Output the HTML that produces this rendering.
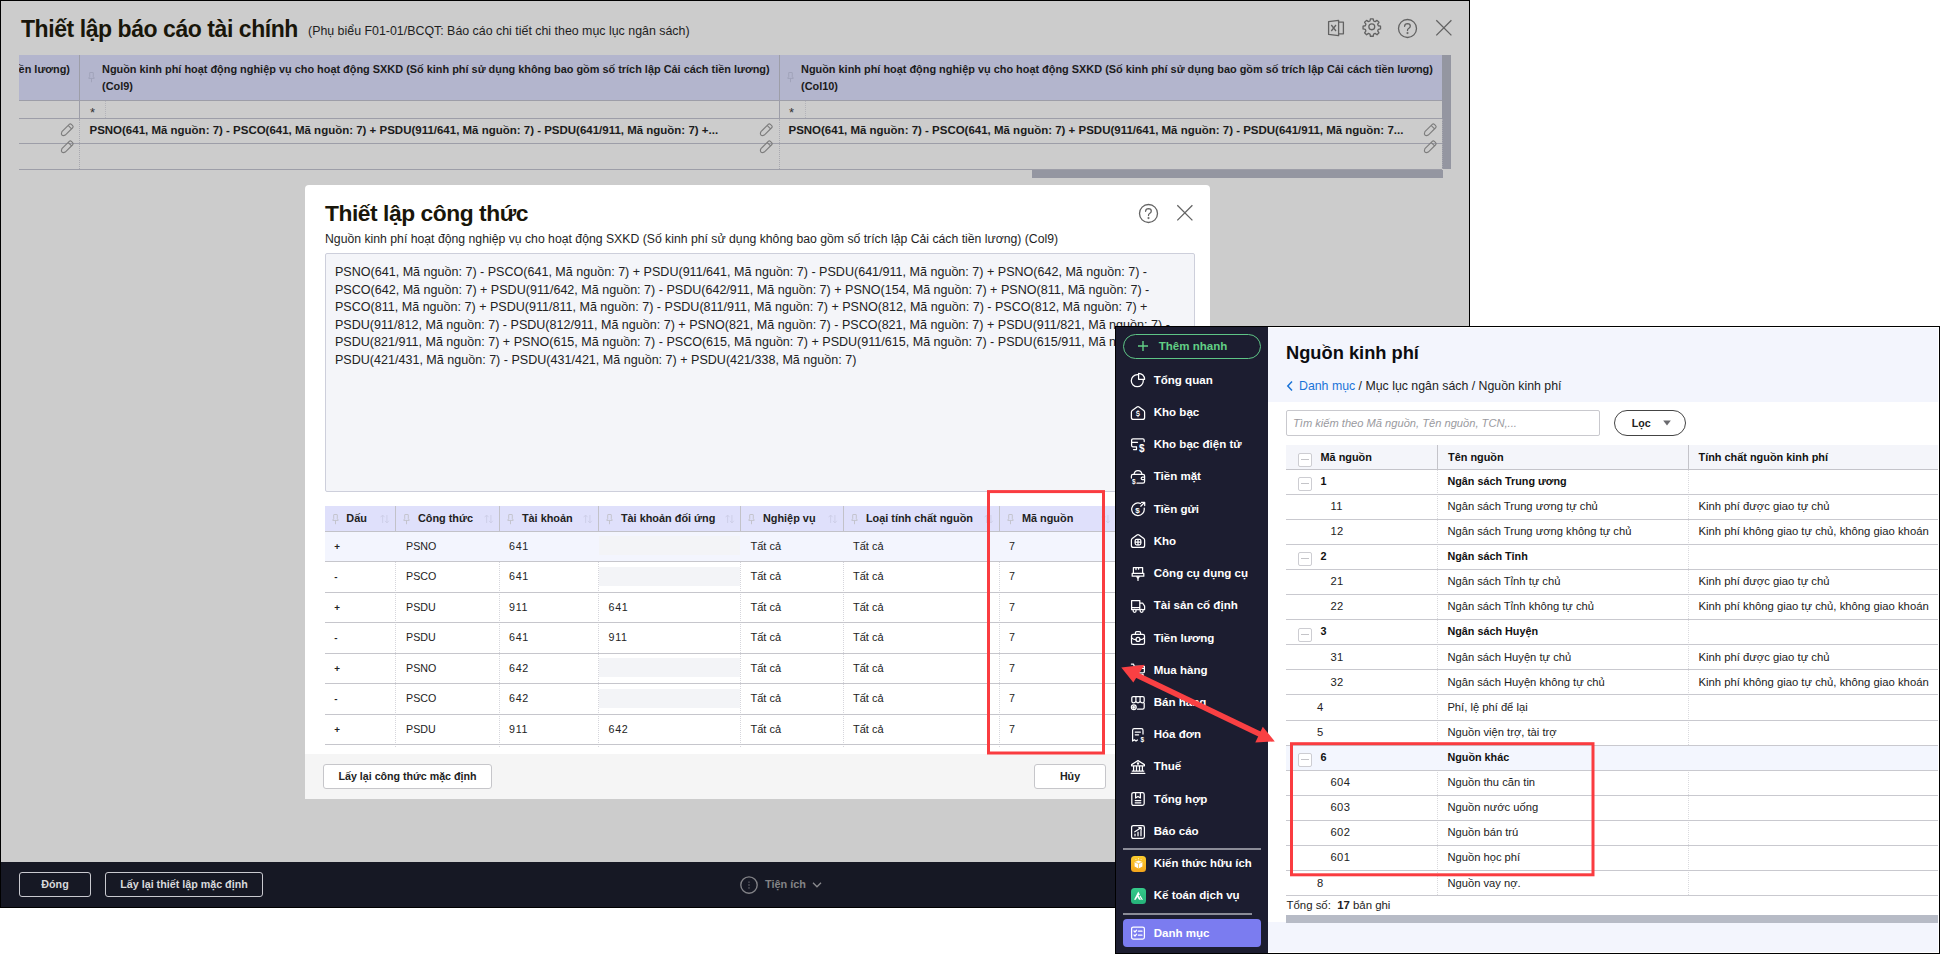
<!DOCTYPE html>
<html>
<head>
<meta charset="utf-8">
<title>Thiết lập báo cáo tài chính</title>
<style>

*{box-sizing:border-box;margin:0;padding:0}
html,body{width:1940px;height:954px;overflow:hidden;background:#fff}
body{font-family:"Liberation Sans",sans-serif;font-size:13px;line-height:16px;color:#111;position:relative}
div,span,svg{position:absolute}
span.i{position:static}
#w1{left:0;top:0;width:1470px;height:908px;background:#cccccc;overflow:hidden}
#w1 .bt{left:0;top:0;width:1470px;height:1px;background:#000}
#w1 .bl{left:0;top:0;width:1px;height:908px;background:#000}
#w1 .br{left:1469px;top:0;width:1px;height:908px;background:#000}
#w1 .bb{left:0;top:907px;width:1470px;height:1px;background:#000}
.t{white-space:nowrap}
.b{font-weight:bold}
#w1 .title{left:21px;top:14px;font-size:23px;letter-spacing:-0.44px;font-weight:bold;color:#19160a;line-height:28px}
#w1 .sub{left:308px;top:23px;font-size:12.4px;color:#1e1e1e;line-height:16px}
#w1foot{left:1px;top:862px;width:1468px;height:46px;background:#161824}
.dbtn{top:10px;height:25px;border:1px solid #c9c9cf;border-radius:3px;color:#d8d8dc;font-weight:bold;font-size:10.72px;line-height:23px;text-align:center;white-space:nowrap}
.g1t{font-weight:bold;font-size:12px;color:#1b1b1b;line-height:16px;white-space:nowrap}
#dlg{left:305px;top:185px;width:905px;height:614px;background:#fff;border-radius:4px 4px 0 0;overflow:hidden}
#dlg .dtitle{left:20px;top:14px;font-size:22px;font-weight:bold;color:#19160a;line-height:28px}
#dlg .dsub{left:20px;top:45px;font-size:12.6px;line-height:16px;color:#1e1e1e}
#ta{left:20px;top:69px;width:870px;height:238px;background:#f4f5f9;border:1px solid #cdcfdb;border-radius:2px}
#ta .l{left:9px;font-size:12.6px;line-height:16px;color:#222;white-space:nowrap}
#dfoot{left:0;top:569px;width:905px;height:46px;background:#f5f5f5}
.lbtn{top:10px;height:25px;border:1px solid #c6c6ca;border-radius:3px;background:#fff;color:#222;font-weight:bold;font-size:10.66px;line-height:23px;text-align:center;white-space:nowrap}
.g2h{font-weight:bold;font-size:12px;line-height:16px;color:#222;white-space:nowrap}
.g2c{font-size:10.7px;line-height:16px;color:#222;white-space:nowrap}
#w2{left:1115px;top:326px;width:825px;height:628px;background:#fff;overflow:hidden}
#side{left:0;top:0;width:153px;height:628px;background:#1c1d30}
#side .it{left:38px;font-size:12.6px;font-weight:bold;color:#fff;white-space:nowrap;line-height:16px}
#main{left:153px;top:0;width:672px;height:628px;background:#fff}
.g3c{white-space:nowrap;line-height:16px;font-size:12px;color:#222}
.g3b{white-space:nowrap;line-height:16px;font-size:12px;color:#111;font-weight:bold}
.cb{width:14px;height:14px;border:1px solid #cdcdd2;border-radius:2px;background:#fff}
.cb i{position:absolute;left:2px;right:2px;top:5px;height:1px;background:#c4c4c8}
#anno{left:0;top:0;width:1940px;height:954px}

</style>
</head>
<body>
<div id="w1">
<div class="t title" style="left:21px;top:15px;">Thiết lập báo cáo tài chính</div>
<div class="t sub" style="left:308px;top:23px;">(Phụ biểu F01-01/BCQT: Báo cáo chi tiết chi theo mục lục ngân sách)</div>
<svg style="left:1326px;top:18px" width="20" height="20" viewBox="0 0 20 20"><g fill="none" stroke="#626262" stroke-width="1.3" stroke-linejoin="round"><path d="M2.6 3.6 L12.6 2.3 V17.7 L2.6 16.4 Z"/><path d="M12.6 4.2 H17.4 V15.8 H12.6"/><path d="M5.3 7 L10 13 M10 7 L5.3 13"/></g></svg>
<svg style="left:1362.2px;top:17.4px" width="19.6" height="19.6" viewBox="0 0 24 24"><g fill="none" stroke="#626262" stroke-width="1.6" stroke-linejoin="round"><circle cx="12" cy="12" r="3.6"/><path d="M10.3 2.2h3.4l.5 2.7 1.9.8 2.3-1.6 2.4 2.4-1.6 2.3.8 1.9 2.7.5v3.4l-2.7.5-.8 1.9 1.6 2.3-2.4 2.4-2.3-1.6-1.9.8-.5 2.7h-3.4l-.5-2.7-1.9-.8-2.3 1.6-2.4-2.4 1.6-2.3-.8-1.9-2.7-.5v-3.4l2.7-.5.8-1.9-1.6-2.3 2.4-2.4 2.3 1.6 1.9-.8z"/></g></svg>
<svg style="left:1397px;top:18px" width="21" height="21" viewBox="0 0 21 21"><g fill="none" stroke="#626262" stroke-width="1.3" stroke-linecap="round"><circle cx="10.5" cy="10.5" r="9"/><path d="M7.6 8.3 Q7.8 5.6 10.5 5.6 Q13.3 5.7 13.3 8.1 Q13.3 9.6 11.6 10.5 Q10.5 11.1 10.5 12.6"/><circle cx="10.5" cy="15.1" r="0.4"/></g></svg>
<svg style="left:1435px;top:19px" width="18" height="18" viewBox="0 0 18 18"><path d="M1.3 1.3 L16.4 16.4 M16.4 1.3 L1.3 16.4" fill="none" stroke="#626262" stroke-width="1.3"/></svg>
<div style="left:19px;top:55px;width:1423px;height:45px;background:#b3b5cd"></div>
<div style="left:19px;top:100px;width:1423px;height:1px;background:#9d9ea8"></div>
<div style="left:19px;top:118px;width:1423px;height:1px;background:#9d9ea8"></div>
<div style="left:19px;top:143px;width:1423px;height:1px;background:#9d9ea8"></div>
<div style="left:19px;top:169px;width:1423px;height:1px;background:#9d9ea8"></div>
<div style="left:79px;top:55px;width:1px;height:64px;background:#9d9ea8"></div>
<div style="left:79px;top:119px;width:0px;height:50px;border-left:1px dotted #a9a9b0"></div>
<div style="left:779px;top:55px;width:1px;height:64px;background:#9d9ea8"></div>
<div style="left:779px;top:119px;width:0px;height:50px;border-left:1px dotted #a9a9b0"></div>
<div style="left:105px;top:101px;width:0px;height:17px;border-left:1px dotted #b4b4ba"></div>
<div style="left:805px;top:101px;width:0px;height:17px;border-left:1px dotted #b4b4ba"></div>
<div style="left:19px;top:55px;width:60px;height:45px;overflow:hidden"><div class="g1t" style="left:-49px;width:100px;text-align:right;top:6px;font-size:10.91px">tiền lương)</div></div>
<div class="g1t" style="left:102px;top:61px;font-size:10.91px">Nguồn kinh phí hoạt động nghiệp vụ cho hoạt động SXKD (Số kinh phí sử dụng không bao gồm số trích lập Cải cách tiền lương)</div>
<div class="g1t" style="left:102px;top:77.5px;font-size:10.91px">(Col9)</div>
<div class="g1t" style="left:801px;top:61px;font-size:10.91px">Nguồn kinh phí hoạt động nghiệp vụ cho hoạt động SXKD (Số kinh phí sử dụng bao gồm số trích lập Cải cách tiền lương)</div>
<div class="g1t" style="left:801px;top:77.5px;font-size:10.91px">(Col10)</div>
<svg style="left:88px;top:72.3px" width="7" height="11" viewBox="0 0 7 11"><path d="M1.7 0.9 Q1.7 0.5 2.1 0.5 H4.9 Q5.3 0.5 5.3 0.9 V4.6 L6.2 6 V6.4 H0.8 V6 L1.7 4.6 Z M3.5 6.4 V10.2" fill="none" stroke="#a0a2b8" stroke-width="0.95"/></svg>
<svg style="left:787px;top:72.3px" width="7" height="11" viewBox="0 0 7 11"><path d="M1.7 0.9 Q1.7 0.5 2.1 0.5 H4.9 Q5.3 0.5 5.3 0.9 V4.6 L6.2 6 V6.4 H0.8 V6 L1.7 4.6 Z M3.5 6.4 V10.2" fill="none" stroke="#a0a2b8" stroke-width="0.95"/></svg>
<div class="t" style="left:90px;top:104.5px;font-size:13px;color:#333;line-height:16px">*</div>
<div class="t" style="left:789px;top:104.5px;font-size:13px;color:#333;line-height:16px">*</div>
<div class="g1t" style="left:89.5px;top:122px;font-size:11.49px">PSNO(641, Mã nguồn: 7) - PSCO(641, Mã nguồn: 7) + PSDU(911/641, Mã nguồn: 7) - PSDU(641/911, Mã nguồn: 7) +...</div>
<div class="g1t" style="left:788.5px;top:122px;font-size:11.49px">PSNO(641, Mã nguồn: 7) - PSCO(641, Mã nguồn: 7) + PSDU(911/641, Mã nguồn: 7) - PSDU(641/911, Mã nguồn: 7...</div>
<svg style="left:58.6px;top:122px" width="16" height="16" viewBox="0 0 16 16"><g transform="rotate(-45 8 8)" fill="none" stroke="#7c7c7c" stroke-width="1.1"><path d="M3.2 5.6 H13.6 Q15.1 5.6 15.1 7.1 V8.9 Q15.1 10.4 13.6 10.4 H3.2 Q0.9 9.6 0.9 8 Q0.9 6.4 3.2 5.6 Z M12 5.6 V10.4"/></g></svg>
<svg style="left:58.6px;top:139px" width="16" height="16" viewBox="0 0 16 16"><g transform="rotate(-45 8 8)" fill="none" stroke="#7c7c7c" stroke-width="1.1"><path d="M3.2 5.6 H13.6 Q15.1 5.6 15.1 7.1 V8.9 Q15.1 10.4 13.6 10.4 H3.2 Q0.9 9.6 0.9 8 Q0.9 6.4 3.2 5.6 Z M12 5.6 V10.4"/></g></svg>
<svg style="left:757.6px;top:122px" width="16" height="16" viewBox="0 0 16 16"><g transform="rotate(-45 8 8)" fill="none" stroke="#7c7c7c" stroke-width="1.1"><path d="M3.2 5.6 H13.6 Q15.1 5.6 15.1 7.1 V8.9 Q15.1 10.4 13.6 10.4 H3.2 Q0.9 9.6 0.9 8 Q0.9 6.4 3.2 5.6 Z M12 5.6 V10.4"/></g></svg>
<svg style="left:757.6px;top:139px" width="16" height="16" viewBox="0 0 16 16"><g transform="rotate(-45 8 8)" fill="none" stroke="#7c7c7c" stroke-width="1.1"><path d="M3.2 5.6 H13.6 Q15.1 5.6 15.1 7.1 V8.9 Q15.1 10.4 13.6 10.4 H3.2 Q0.9 9.6 0.9 8 Q0.9 6.4 3.2 5.6 Z M12 5.6 V10.4"/></g></svg>
<svg style="left:1422px;top:122px" width="16" height="16" viewBox="0 0 16 16"><g transform="rotate(-45 8 8)" fill="none" stroke="#7c7c7c" stroke-width="1.1"><path d="M3.2 5.6 H13.6 Q15.1 5.6 15.1 7.1 V8.9 Q15.1 10.4 13.6 10.4 H3.2 Q0.9 9.6 0.9 8 Q0.9 6.4 3.2 5.6 Z M12 5.6 V10.4"/></g></svg>
<svg style="left:1422px;top:139px" width="16" height="16" viewBox="0 0 16 16"><g transform="rotate(-45 8 8)" fill="none" stroke="#7c7c7c" stroke-width="1.1"><path d="M3.2 5.6 H13.6 Q15.1 5.6 15.1 7.1 V8.9 Q15.1 10.4 13.6 10.4 H3.2 Q0.9 9.6 0.9 8 Q0.9 6.4 3.2 5.6 Z M12 5.6 V10.4"/></g></svg>
<div style="left:1442px;top:55px;width:9px;height:114px;background:#9496a1"></div>
<div style="left:1032px;top:170px;width:411px;height:8px;background:#9496a1"></div>
<div style="left:1442px;top:119px;width:0px;height:50px;border-left:1px dotted #a9a9b0"></div>
<div id="w1foot"><div class="dbtn" style="left:18px;width:72px">Đóng</div><div class="dbtn" style="left:104px;width:158px">Lấy lại thiết lập mặc định</div><svg style="left:738.2px;top:12.6px" width="20" height="20" viewBox="0 0 20 20"><g fill="none" stroke="#838388" stroke-width="1.35"><circle cx="10" cy="10" r="8.2"/></g><g fill="#838388"><circle cx="10" cy="7.1" r="0.7"/><circle cx="10" cy="10" r="0.7"/><circle cx="10" cy="12.9" r="0.7"/></g></svg><div class="t b" style="left:764px;top:14px;font-size:10.9px;color:#838386;line-height:16px">Tiện ích</div><svg style="left:811px;top:17.5px" width="10" height="10" viewBox="0 0 10 10"><path d="M1 2.8 L5 6.8 L9 2.8" fill="none" stroke="#8a8a8e" stroke-width="1.3"/></svg></div>
<div class="bt"></div><div class="bl"></div><div class="br"></div><div class="bb"></div>
<div id="dlg">
<div class="t dtitle" style="left:20px;top:14px;font-size:22.8px;letter-spacing:-0.45px">Thiết lập công thức</div>
<div class="t dsub" style="left:20px;top:46px;font-size:12.24px">Nguồn kinh phí hoạt động nghiệp vụ cho hoạt động SXKD (Số kinh phí sử dụng không bao gồm số trích lập Cải cách tiền lương) (Col9)</div>
<svg style="left:833px;top:18px" width="21" height="21" viewBox="0 0 21 21"><g fill="none" stroke="#646464" stroke-width="1.3" stroke-linecap="round"><circle cx="10.5" cy="10.5" r="9"/><path d="M7.6 8.3 Q7.8 5.6 10.5 5.6 Q13.3 5.7 13.3 8.1 Q13.3 9.6 11.6 10.5 Q10.5 11.1 10.5 12.6"/><circle cx="10.5" cy="15.1" r="0.4"/></g></svg>
<svg style="left:871px;top:19px" width="18" height="18" viewBox="0 0 18 18"><path d="M1.3 1.3 L16.4 16.4 M16.4 1.3 L1.3 16.4" fill="none" stroke="#646464" stroke-width="1.3"/></svg>
<div id="ta" style="left:20px;top:68px;width:870px;height:239px">
<div class="l" style="top:10px;font-size:12.56px">PSNO(641, Mã nguồn: 7) - PSCO(641, Mã nguồn: 7) + PSDU(911/641, Mã nguồn: 7) - PSDU(641/911, Mã nguồn: 7) + PSNO(642, Mã nguồn: 7) -</div>
<div class="l" style="top:28px;font-size:12.56px">PSCO(642, Mã nguồn: 7) + PSDU(911/642, Mã nguồn: 7) - PSDU(642/911, Mã nguồn: 7) + PSNO(154, Mã nguồn: 7) + PSNO(811, Mã nguồn: 7) -</div>
<div class="l" style="top:45px;font-size:12.56px">PSCO(811, Mã nguồn: 7) + PSDU(911/811, Mã nguồn: 7) - PSDU(811/911, Mã nguồn: 7) + PSNO(812, Mã nguồn: 7) - PSCO(812, Mã nguồn: 7) +</div>
<div class="l" style="top:63px;font-size:12.56px">PSDU(911/812, Mã nguồn: 7) - PSDU(812/911, Mã nguồn: 7) + PSNO(821, Mã nguồn: 7) - PSCO(821, Mã nguồn: 7) + PSDU(911/821, Mã nguồn: 7) -</div>
<div class="l" style="top:80px;font-size:12.56px">PSDU(821/911, Mã nguồn: 7) + PSNO(615, Mã nguồn: 7) - PSCO(615, Mã nguồn: 7) + PSDU(911/615, Mã nguồn: 7) - PSDU(615/911, Mã nguồn: 7) +</div>
<div class="l" style="top:97.5px;font-size:12.56px">PSDU(421/431, Mã nguồn: 7) - PSDU(431/421, Mã nguồn: 7) + PSDU(421/338, Mã nguồn: 7)</div>
</div>
<div style="left:20px;top:321px;width:791px;height:25px;background:#dfe0fb"></div>
<div style="left:20px;top:346px;width:791px;height:1px;background:#c2c2c9"></div>
<div style="left:90px;top:321px;width:1px;height:25px;background:#c2c2c9"></div>
<div style="left:90px;top:347px;width:0px;height:215px;border-left:1px dotted #d6d6dc"></div>
<div style="left:194px;top:321px;width:1px;height:25px;background:#c2c2c9"></div>
<div style="left:194px;top:347px;width:0px;height:215px;border-left:1px dotted #d6d6dc"></div>
<div style="left:293px;top:321px;width:1px;height:25px;background:#c2c2c9"></div>
<div style="left:293px;top:347px;width:0px;height:215px;border-left:1px dotted #d6d6dc"></div>
<div style="left:435px;top:321px;width:1px;height:25px;background:#c2c2c9"></div>
<div style="left:435px;top:347px;width:0px;height:215px;border-left:1px dotted #d6d6dc"></div>
<div style="left:538px;top:321px;width:1px;height:25px;background:#c2c2c9"></div>
<div style="left:538px;top:347px;width:0px;height:215px;border-left:1px dotted #d6d6dc"></div>
<div style="left:694px;top:321px;width:1px;height:25px;background:#c2c2c9"></div>
<div style="left:694px;top:347px;width:0px;height:215px;border-left:1px dotted #d6d6dc"></div>
<svg style="left:26.8px;top:328.6px" width="7" height="11" viewBox="0 0 7 11"><path d="M1.7 0.9 Q1.7 0.5 2.1 0.5 H4.9 Q5.3 0.5 5.3 0.9 V4.6 L6.2 6 V6.4 H0.8 V6 L1.7 4.6 Z M3.5 6.4 V10.2" fill="none" stroke="#c2c2ca" stroke-width="0.95"/></svg>
<div class="g2h" style="left:41.3px;top:325.3px;font-size:10.9px">Dấu</div>
<svg style="left:74.5px;top:329.4px" width="10" height="10" viewBox="0 0 10 10"><path d="M2.6 9 V1.2 M0.7 3.2 L2.6 1 L4.5 3.2 M6.9 1 V8.8 M5 6.8 L6.9 9 L8.8 6.8" fill="none" stroke="#cdcee6" stroke-width="0.9"/></svg>
<svg style="left:98.4px;top:328.6px" width="7" height="11" viewBox="0 0 7 11"><path d="M1.7 0.9 Q1.7 0.5 2.1 0.5 H4.9 Q5.3 0.5 5.3 0.9 V4.6 L6.2 6 V6.4 H0.8 V6 L1.7 4.6 Z M3.5 6.4 V10.2" fill="none" stroke="#c2c2ca" stroke-width="0.95"/></svg>
<div class="g2h" style="left:112.9px;top:325.3px;font-size:10.9px">Công thức</div>
<svg style="left:178.5px;top:329.4px" width="10" height="10" viewBox="0 0 10 10"><path d="M2.6 9 V1.2 M0.7 3.2 L2.6 1 L4.5 3.2 M6.9 1 V8.8 M5 6.8 L6.9 9 L8.8 6.8" fill="none" stroke="#cdcee6" stroke-width="0.9"/></svg>
<svg style="left:202.4px;top:328.6px" width="7" height="11" viewBox="0 0 7 11"><path d="M1.7 0.9 Q1.7 0.5 2.1 0.5 H4.9 Q5.3 0.5 5.3 0.9 V4.6 L6.2 6 V6.4 H0.8 V6 L1.7 4.6 Z M3.5 6.4 V10.2" fill="none" stroke="#c2c2ca" stroke-width="0.95"/></svg>
<div class="g2h" style="left:216.9px;top:325.3px;font-size:10.9px">Tài khoản</div>
<svg style="left:277.5px;top:329.4px" width="10" height="10" viewBox="0 0 10 10"><path d="M2.6 9 V1.2 M0.7 3.2 L2.6 1 L4.5 3.2 M6.9 1 V8.8 M5 6.8 L6.9 9 L8.8 6.8" fill="none" stroke="#cdcee6" stroke-width="0.9"/></svg>
<svg style="left:301.4px;top:328.6px" width="7" height="11" viewBox="0 0 7 11"><path d="M1.7 0.9 Q1.7 0.5 2.1 0.5 H4.9 Q5.3 0.5 5.3 0.9 V4.6 L6.2 6 V6.4 H0.8 V6 L1.7 4.6 Z M3.5 6.4 V10.2" fill="none" stroke="#c2c2ca" stroke-width="0.95"/></svg>
<div class="g2h" style="left:315.9px;top:325.3px;font-size:10.9px">Tài khoản đối ứng</div>
<svg style="left:419.5px;top:329.4px" width="10" height="10" viewBox="0 0 10 10"><path d="M2.6 9 V1.2 M0.7 3.2 L2.6 1 L4.5 3.2 M6.9 1 V8.8 M5 6.8 L6.9 9 L8.8 6.8" fill="none" stroke="#cdcee6" stroke-width="0.9"/></svg>
<svg style="left:443.4px;top:328.6px" width="7" height="11" viewBox="0 0 7 11"><path d="M1.7 0.9 Q1.7 0.5 2.1 0.5 H4.9 Q5.3 0.5 5.3 0.9 V4.6 L6.2 6 V6.4 H0.8 V6 L1.7 4.6 Z M3.5 6.4 V10.2" fill="none" stroke="#c2c2ca" stroke-width="0.95"/></svg>
<div class="g2h" style="left:457.9px;top:325.3px;font-size:10.9px">Nghiệp vụ</div>
<svg style="left:522.5px;top:329.4px" width="10" height="10" viewBox="0 0 10 10"><path d="M2.6 9 V1.2 M0.7 3.2 L2.6 1 L4.5 3.2 M6.9 1 V8.8 M5 6.8 L6.9 9 L8.8 6.8" fill="none" stroke="#cdcee6" stroke-width="0.9"/></svg>
<svg style="left:546.4px;top:328.6px" width="7" height="11" viewBox="0 0 7 11"><path d="M1.7 0.9 Q1.7 0.5 2.1 0.5 H4.9 Q5.3 0.5 5.3 0.9 V4.6 L6.2 6 V6.4 H0.8 V6 L1.7 4.6 Z M3.5 6.4 V10.2" fill="none" stroke="#c2c2ca" stroke-width="0.95"/></svg>
<div class="g2h" style="left:560.9px;top:325.3px;font-size:10.9px">Loại tính chất nguồn</div>
<svg style="left:678.5px;top:329.4px" width="10" height="10" viewBox="0 0 10 10"><path d="M2.6 9 V1.2 M0.7 3.2 L2.6 1 L4.5 3.2 M6.9 1 V8.8 M5 6.8 L6.9 9 L8.8 6.8" fill="none" stroke="#cdcee6" stroke-width="0.9"/></svg>
<svg style="left:702.4px;top:328.6px" width="7" height="11" viewBox="0 0 7 11"><path d="M1.7 0.9 Q1.7 0.5 2.1 0.5 H4.9 Q5.3 0.5 5.3 0.9 V4.6 L6.2 6 V6.4 H0.8 V6 L1.7 4.6 Z M3.5 6.4 V10.2" fill="none" stroke="#c2c2ca" stroke-width="0.95"/></svg>
<div class="g2h" style="left:716.9px;top:325.3px;font-size:10.9px">Mã nguồn</div>
<svg style="left:795.5px;top:329.4px" width="10" height="10" viewBox="0 0 10 10"><path d="M2.6 9 V1.2 M0.7 3.2 L2.6 1 L4.5 3.2 M6.9 1 V8.8 M5 6.8 L6.9 9 L8.8 6.8" fill="none" stroke="#cdcee6" stroke-width="0.9"/></svg>
<div style="left:20px;top:347px;width:791px;height:29px;background:#f3f5fe"></div>
<div style="left:20px;top:376px;width:791px;height:1px;background:#c6c6cc"></div>
<div style="left:20px;top:407px;width:791px;height:1px;background:#c6c6cc"></div>
<div style="left:20px;top:437px;width:791px;height:1px;background:#c6c6cc"></div>
<div style="left:20px;top:468px;width:791px;height:1px;background:#c6c6cc"></div>
<div style="left:20px;top:498px;width:791px;height:1px;background:#c6c6cc"></div>
<div style="left:20px;top:529px;width:791px;height:1px;background:#c6c6cc"></div>
<div style="left:20px;top:559px;width:791px;height:1px;background:#c6c6cc"></div>
<div class="g2c" style="left:29.2px;top:353.9px;font-weight:bold;font-size:9.8px">+</div>
<div class="g2c" style="left:101px;top:352.7px;">PSNO</div>
<div class="g2c" style="left:204px;top:352.7px;letter-spacing:0.7px">641</div>
<div style="left:294px;top:351px;width:141px;height:19px;background:#f3f4f7"></div>
<div class="g2c" style="left:445.5px;top:352.7px;font-size:11px">Tất cả</div>
<div class="g2c" style="left:548px;top:352.7px;font-size:11px">Tất cả</div>
<div class="g2c" style="left:704px;top:352.7px;">7</div>
<div class="g2c" style="left:29.2px;top:384.4px;font-weight:bold;font-size:9.8px">-</div>
<div class="g2c" style="left:101px;top:383.2px;">PSCO</div>
<div class="g2c" style="left:204px;top:383.2px;letter-spacing:0.7px">641</div>
<div style="left:294px;top:381.5px;width:141px;height:19px;background:#f3f4f7"></div>
<div class="g2c" style="left:445.5px;top:383.2px;font-size:11px">Tất cả</div>
<div class="g2c" style="left:548px;top:383.2px;font-size:11px">Tất cả</div>
<div class="g2c" style="left:704px;top:383.2px;">7</div>
<div class="g2c" style="left:29.2px;top:414.9px;font-weight:bold;font-size:9.8px">+</div>
<div class="g2c" style="left:101px;top:413.7px;">PSDU</div>
<div class="g2c" style="left:204px;top:413.7px;letter-spacing:0.7px">911</div>
<div class="g2c" style="left:303.5px;top:413.7px;letter-spacing:0.7px">641</div>
<div class="g2c" style="left:445.5px;top:413.7px;font-size:11px">Tất cả</div>
<div class="g2c" style="left:548px;top:413.7px;font-size:11px">Tất cả</div>
<div class="g2c" style="left:704px;top:413.7px;">7</div>
<div class="g2c" style="left:29.2px;top:445.4px;font-weight:bold;font-size:9.8px">-</div>
<div class="g2c" style="left:101px;top:444.2px;">PSDU</div>
<div class="g2c" style="left:204px;top:444.2px;letter-spacing:0.7px">641</div>
<div class="g2c" style="left:303.5px;top:444.2px;letter-spacing:0.7px">911</div>
<div class="g2c" style="left:445.5px;top:444.2px;font-size:11px">Tất cả</div>
<div class="g2c" style="left:548px;top:444.2px;font-size:11px">Tất cả</div>
<div class="g2c" style="left:704px;top:444.2px;">7</div>
<div class="g2c" style="left:29.2px;top:475.9px;font-weight:bold;font-size:9.8px">+</div>
<div class="g2c" style="left:101px;top:474.7px;">PSNO</div>
<div class="g2c" style="left:204px;top:474.7px;letter-spacing:0.7px">642</div>
<div style="left:294px;top:473px;width:141px;height:19px;background:#f3f4f7"></div>
<div class="g2c" style="left:445.5px;top:474.7px;font-size:11px">Tất cả</div>
<div class="g2c" style="left:548px;top:474.7px;font-size:11px">Tất cả</div>
<div class="g2c" style="left:704px;top:474.7px;">7</div>
<div class="g2c" style="left:29.2px;top:506.4px;font-weight:bold;font-size:9.8px">-</div>
<div class="g2c" style="left:101px;top:505.2px;">PSCO</div>
<div class="g2c" style="left:204px;top:505.2px;letter-spacing:0.7px">642</div>
<div style="left:294px;top:503.5px;width:141px;height:19px;background:#f3f4f7"></div>
<div class="g2c" style="left:445.5px;top:505.2px;font-size:11px">Tất cả</div>
<div class="g2c" style="left:548px;top:505.2px;font-size:11px">Tất cả</div>
<div class="g2c" style="left:704px;top:505.2px;">7</div>
<div class="g2c" style="left:29.2px;top:536.9px;font-weight:bold;font-size:9.8px">+</div>
<div class="g2c" style="left:101px;top:535.7px;">PSDU</div>
<div class="g2c" style="left:204px;top:535.7px;letter-spacing:0.7px">911</div>
<div class="g2c" style="left:303.5px;top:535.7px;letter-spacing:0.7px">642</div>
<div class="g2c" style="left:445.5px;top:535.7px;font-size:11px">Tất cả</div>
<div class="g2c" style="left:548px;top:535.7px;font-size:11px">Tất cả</div>
<div class="g2c" style="left:704px;top:535.7px;">7</div>
<div id="dfoot" style="left:0;top:569px"><div class="lbtn" style="left:18px;width:169px">Lấy lại công thức mặc định</div><div class="lbtn" style="left:729px;width:72px">Hủy</div></div>
</div>

</div>
<div id="w2">
<div id="main">
</div>
<div style="left:153px;top:1px;width:672px;height:75px;background:#f3f5fd"></div>
<div style="left:153px;top:596px;width:672px;height:32px;background:#f3f5fd"></div>
<div class="t b" style="left:171px;top:15px;font-size:18.28px;line-height:24px;color:#0c0c10">Nguồn kinh phí</div>
<svg style="left:171px;top:54px" width="8" height="12" viewBox="0 0 8 12"><path d="M6 1.5 L1.8 6 L6 10.5" fill="none" stroke="#1a73d8" stroke-width="1.5"/></svg>
<div class="t" style="left:184px;top:52px;font-size:12.33px;color:#222;line-height:16px"><span class="i" style="color:#1a73d8">Danh mục</span> / Mục lục ngân sách / Nguồn kinh phí</div>
<div style="left:171px;top:84px;width:314px;height:26px;background:#fff;border:1px solid #c9c9ce;border-radius:2px"></div>
<div class="t" style="left:178px;top:89px;font-size:11.13px;font-style:italic;color:#9a9aa0;line-height:16px">Tìm kiếm theo Mã nguồn, Tên nguồn, TCN,...</div>
<div style="left:499px;top:84px;width:72px;height:26px;background:#fff;border:1px solid #444;border-radius:13px"></div>
<div class="t b" style="left:516.8px;top:89px;font-size:10.7px;color:#222;line-height:16px">Lọc</div>
<svg style="left:546.5px;top:93px" width="10" height="8" viewBox="0 0 10 8"><path d="M1.2 1.5 H8.8 L5 6.5 Z" fill="#6a6a6e"/></svg>
<div style="left:171px;top:119px;width:654px;height:24px;background:#f4f5fa"></div>
<div style="left:171px;top:143px;width:654px;height:1px;background:#c4c4ca"></div>
<div style="left:322px;top:119px;width:1px;height:24px;background:#c4c4ca"></div>
<div style="left:322px;top:144px;width:0px;height:425px;border-left:1px dotted #dadade"></div>
<div style="left:573px;top:119px;width:1px;height:24px;background:#c4c4ca"></div>
<div style="left:573px;top:144px;width:0px;height:425px;border-left:1px dotted #dadade"></div>
<div class="cb" style="left:183px;top:127px"><i></i></div>
<div class="g3b" style="left:205.5px;top:123px;font-size:10.9px">Mã nguồn</div>
<div class="g3b" style="left:333px;top:123px;font-size:10.9px">Tên nguồn</div>
<div class="g3b" style="left:583.5px;top:123px;font-size:10.9px">Tính chất nguồn kinh phí</div>
<div style="left:171px;top:168px;width:654px;height:1px;background:#c9c9cf"></div>
<div class="cb" style="left:183px;top:151px"><i></i></div>
<div class="g3b" style="left:205.5px;top:147px;font-size:10.8px">1</div>
<div class="g3b" style="left:332.4px;top:147px;font-size:10.8px">Ngân sách Trung ương</div>
<div style="left:171px;top:193px;width:654px;height:1px;background:#c9c9cf"></div>
<div class="g3c" style="left:215.5px;top:172px;font-size:11.2px;letter-spacing:0.4px">11</div>
<div class="g3c" style="left:332.4px;top:172px;font-size:11.2px">Ngân sách Trung ương tự chủ</div>
<div class="g3c" style="left:583.5px;top:172px;font-size:11.29px">Kinh phí được giao tự chủ</div>
<div style="left:171px;top:218px;width:654px;height:1px;background:#c9c9cf"></div>
<div class="g3c" style="left:215.5px;top:197px;font-size:11.2px;letter-spacing:0.4px">12</div>
<div class="g3c" style="left:332.4px;top:197px;font-size:11.2px">Ngân sách Trung ương không tự chủ</div>
<div class="g3c" style="left:583.5px;top:197px;font-size:11.29px">Kinh phí không giao tự chủ, không giao khoán</div>
<div style="left:171px;top:243px;width:654px;height:1px;background:#c9c9cf"></div>
<div class="cb" style="left:183px;top:226px"><i></i></div>
<div class="g3b" style="left:205.5px;top:222px;font-size:10.8px">2</div>
<div class="g3b" style="left:332.4px;top:222px;font-size:10.8px">Ngân sách Tỉnh</div>
<div style="left:171px;top:268px;width:654px;height:1px;background:#c9c9cf"></div>
<div class="g3c" style="left:215.5px;top:247px;font-size:11.2px;letter-spacing:0.4px">21</div>
<div class="g3c" style="left:332.4px;top:247px;font-size:11.2px">Ngân sách Tỉnh tự chủ</div>
<div class="g3c" style="left:583.5px;top:247px;font-size:11.29px">Kinh phí được giao tự chủ</div>
<div style="left:171px;top:293px;width:654px;height:1px;background:#c9c9cf"></div>
<div class="g3c" style="left:215.5px;top:272px;font-size:11.2px;letter-spacing:0.4px">22</div>
<div class="g3c" style="left:332.4px;top:272px;font-size:11.2px">Ngân sách Tỉnh không tự chủ</div>
<div class="g3c" style="left:583.5px;top:272px;font-size:11.29px">Kinh phí không giao tự chủ, không giao khoán</div>
<div style="left:171px;top:318px;width:654px;height:1px;background:#c9c9cf"></div>
<div class="cb" style="left:183px;top:302px"><i></i></div>
<div class="g3b" style="left:205.5px;top:297px;font-size:10.8px">3</div>
<div class="g3b" style="left:332.4px;top:297px;font-size:10.8px">Ngân sách Huyện</div>
<div style="left:171px;top:343px;width:654px;height:1px;background:#c9c9cf"></div>
<div class="g3c" style="left:215.5px;top:323px;font-size:11.2px;letter-spacing:0.4px">31</div>
<div class="g3c" style="left:332.4px;top:323px;font-size:11.2px">Ngân sách Huyện tự chủ</div>
<div class="g3c" style="left:583.5px;top:323px;font-size:11.29px">Kinh phí được giao tự chủ</div>
<div style="left:171px;top:368px;width:654px;height:1px;background:#c9c9cf"></div>
<div class="g3c" style="left:215.5px;top:348px;font-size:11.2px;letter-spacing:0.4px">32</div>
<div class="g3c" style="left:332.4px;top:348px;font-size:11.2px">Ngân sách Huyện không tự chủ</div>
<div class="g3c" style="left:583.5px;top:348px;font-size:11.29px">Kinh phí không giao tự chủ, không giao khoán</div>
<div style="left:171px;top:394px;width:654px;height:1px;background:#c9c9cf"></div>
<div class="g3c" style="left:202px;top:373px;font-size:11.2px">4</div>
<div class="g3c" style="left:332.4px;top:373px;font-size:11.2px">Phí, lệ phí để lại</div>
<div style="left:171px;top:419px;width:654px;height:1px;background:#c9c9cf"></div>
<div class="g3c" style="left:202px;top:398px;font-size:11.2px">5</div>
<div class="g3c" style="left:332.4px;top:398px;font-size:11.2px">Nguồn viện trợ, tài trợ</div>
<div style="left:171px;top:420px;width:654px;height:24px;background:#f3f6fe"></div>
<div style="left:171px;top:444px;width:654px;height:1px;background:#c9c9cf"></div>
<div class="cb" style="left:183px;top:427px"><i></i></div>
<div class="g3b" style="left:205.5px;top:423px;font-size:10.8px">6</div>
<div class="g3b" style="left:332.4px;top:423px;font-size:10.8px">Nguồn khác</div>
<div style="left:171px;top:469px;width:654px;height:1px;background:#c9c9cf"></div>
<div class="g3c" style="left:215.5px;top:448px;font-size:11.2px;letter-spacing:0.4px">604</div>
<div class="g3c" style="left:332.4px;top:448px;font-size:11.2px">Nguồn thu căn tin</div>
<div style="left:171px;top:494px;width:654px;height:1px;background:#c9c9cf"></div>
<div class="g3c" style="left:215.5px;top:473px;font-size:11.2px;letter-spacing:0.4px">603</div>
<div class="g3c" style="left:332.4px;top:473px;font-size:11.2px">Nguồn nước uống</div>
<div style="left:171px;top:519px;width:654px;height:1px;background:#c9c9cf"></div>
<div class="g3c" style="left:215.5px;top:498px;font-size:11.2px;letter-spacing:0.4px">602</div>
<div class="g3c" style="left:332.4px;top:498px;font-size:11.2px">Nguồn bán trú</div>
<div style="left:171px;top:544px;width:654px;height:1px;background:#c9c9cf"></div>
<div class="g3c" style="left:215.5px;top:523px;font-size:11.2px;letter-spacing:0.4px">601</div>
<div class="g3c" style="left:332.4px;top:523px;font-size:11.2px">Nguồn học phí</div>
<div style="left:171px;top:569px;width:654px;height:1px;background:#c9c9cf"></div>
<div class="g3c" style="left:202px;top:549px;font-size:11.2px">8</div>
<div class="g3c" style="left:332.4px;top:549px;font-size:11.2px">Nguồn vay nợ.</div>
<div class="t" style="left:171.5px;top:571px;font-size:11.4px;color:#222;line-height:16px">Tổng số:&nbsp; <span class="i b">17</span> bản ghi</div>
<div style="left:171px;top:589px;width:653px;height:8px;background:#b7bbc6"></div>
<div id="side">
</div>
<div style="left:8px;top:8px;width:138px;height:25px;border:1.3px solid #5ec486;border-radius:13px"></div>
<svg style="left:22px;top:14px" width="12" height="12" viewBox="0 0 12 12"><path d="M6 1 V11 M1 6 H11" stroke="#62cf85" stroke-width="1.4" fill="none"/></svg>
<div class="t b" style="left:43.7px;top:12px;font-size:11.54px;color:#62cf85;line-height:16px">Thêm nhanh</div>
<svg style="left:15.3px;top:46px" width="16" height="16" viewBox="0 0 16 16"><g stroke="#fff" fill="none" stroke-width="1.25" stroke-linecap="round" stroke-linejoin="round"><circle cx="7.3" cy="8.7" r="6"/><path d="M8.6 1.3 A6 6 0 0 1 14.6 7.3 H8.6 Z" fill="#1c1d30"/></g></svg>
<div class="t b" style="left:38.7px;top:46px;font-size:11.55px;color:#fff;line-height:16px">Tổng quan</div>
<svg style="left:15.3px;top:78.5px" width="16" height="16" viewBox="0 0 16 16"><g stroke="#fff" fill="none" stroke-width="1.25" stroke-linecap="round" stroke-linejoin="round"><path d="M2.2 5.6 L7 1.9 Q8 1.2 9 1.9 L13.8 5.6 Q14.6 6.2 14.6 7.2 V12.4 Q14.6 14.4 12.6 14.4 H3.4 Q1.4 14.4 1.4 12.4 V7.2 Q1.4 6.2 2.2 5.6 Z"/><path d="M8 5.6 V6.4 M8 11 V11.8" stroke-width="0.9"/><text x="8" y="11.1" font-size="6.4" font-weight="bold" text-anchor="middle" fill="#fff" stroke="none" font-family="Liberation Sans">S</text></g></svg>
<div class="t b" style="left:38.7px;top:78px;font-size:11.55px;color:#fff;line-height:16px">Kho bạc</div>
<svg style="left:15.3px;top:110.5px" width="16" height="16" viewBox="0 0 16 16"><g stroke="#fff" fill="none" stroke-width="1.25" stroke-linecap="round" stroke-linejoin="round"><path d="M14.2 4.5 V3.2 Q14.2 1.8 12.8 1.8 H3 Q1.6 1.8 1.6 3.2 V8.5 Q1.6 9.9 3 9.9 H6.3 M1.6 5.3 H7.5 M3.5 12.6 H6.5 V9.9"/><text x="11.8" y="14.6" font-size="10" font-weight="bold" text-anchor="middle" fill="#fff" stroke="none" font-family="Liberation Sans">$</text></g></svg>
<div class="t b" style="left:38.7px;top:110px;font-size:11.55px;color:#fff;line-height:16px">Kho bạc điện tử</div>
<svg style="left:15.3px;top:143px" width="16" height="16" viewBox="0 0 16 16"><g stroke="#fff" fill="none" stroke-width="1.25" stroke-linecap="round" stroke-linejoin="round"><path d="M4 5.4 Q4.6 1.6 8 1.6 Q11.4 1.6 12 5.4 M7 14.2 H13 Q14.6 14.2 14.6 12.6 V7 Q14.6 5.4 13 5.4 H3 Q1.4 5.4 1.4 7 V9 M14.6 8.2 H12.4 Q11.2 8.2 11.2 9.4 Q11.2 10.6 12.4 10.6 H14.6"/><text x="3.7" y="14.6" font-size="6.5" font-weight="bold" text-anchor="middle" fill="#fff" stroke="none" font-family="Liberation Sans">$</text></g></svg>
<div class="t b" style="left:38.7px;top:142px;font-size:11.55px;color:#fff;line-height:16px">Tiền mặt</div>
<svg style="left:15.3px;top:175px" width="16" height="16" viewBox="0 0 16 16"><g stroke="#fff" fill="none" stroke-width="1.25" stroke-linecap="round" stroke-linejoin="round"><path d="M10.6 2.5 A6.3 6.3 0 1 0 14.2 7.2 M10.8 5.2 L14.6 1.4 M11.4 1.3 H14.7 V4.6"/><text x="7.6" y="11.6" font-size="8" font-weight="bold" text-anchor="middle" fill="#fff" stroke="none" font-family="Liberation Sans">$</text></g></svg>
<div class="t b" style="left:38.7px;top:175px;font-size:11.55px;color:#fff;line-height:16px">Tiền gửi</div>
<svg style="left:15.3px;top:207px" width="16" height="16" viewBox="0 0 16 16"><g stroke="#fff" fill="none" stroke-width="1.25" stroke-linecap="round" stroke-linejoin="round"><path d="M2.2 5.6 L7 1.9 Q8 1.2 9 1.9 L13.8 5.6 Q14.6 6.2 14.6 7.2 V12.4 Q14.6 14.4 12.6 14.4 H3.4 Q1.4 14.4 1.4 12.4 V7.2 Q1.4 6.2 2.2 5.6 Z"/><rect x="5.2" y="6.4" width="5.6" height="5.4" rx="1.2"/><path d="M8 6.4 V11.8 M5.2 9.1 H10.8"/></g></svg>
<div class="t b" style="left:38.7px;top:207px;font-size:11.55px;color:#fff;line-height:16px">Kho</div>
<svg style="left:15.3px;top:239.5px" width="16" height="16" viewBox="0 0 16 16"><g stroke="#fff" fill="none" stroke-width="1.25" stroke-linecap="round" stroke-linejoin="round"><path d="M3.4 1.6 H12.6 V7.4 H3.4 Z M6 1.6 V3.6 M8.6 1.6 V3.2 M2.2 7.4 H13.8 V10.2 H2.2 Z M6.6 10.2 L8 12.6 L9.4 10.2 M8 12.6 V14.4"/></g></svg>
<div class="t b" style="left:38.7px;top:239px;font-size:11.55px;color:#fff;line-height:16px">Công cụ dụng cụ</div>
<svg style="left:15.3px;top:271.5px" width="16" height="16" viewBox="0 0 16 16"><g stroke="#fff" fill="none" stroke-width="1.25" stroke-linecap="round" stroke-linejoin="round"><path d="M1.6 2.6 H9.8 V11.6 H1.6 Z M9.8 5 H12.6 L14.6 8.2 V11.6 H9.8 M1.6 9.6 H9.8"/><circle cx="4.6" cy="12.8" r="1.5" fill="#1c1d30"/><circle cx="11.6" cy="12.8" r="1.5" fill="#1c1d30"/></g></svg>
<div class="t b" style="left:38.7px;top:271px;font-size:11.55px;color:#fff;line-height:16px">Tài sản cố định</div>
<svg style="left:15.3px;top:304px" width="16" height="16" viewBox="0 0 16 16"><g stroke="#fff" fill="none" stroke-width="1.25" stroke-linecap="round" stroke-linejoin="round"><path d="M5.4 4.4 V3 Q5.4 1.6 6.8 1.6 H9.2 Q10.6 1.6 10.6 3 V4.4 M1.5 6 Q1.5 4.4 3.1 4.4 H12.9 Q14.5 4.4 14.5 6 V12.8 Q14.5 14.4 12.9 14.4 H3.1 Q1.5 14.4 1.5 12.8 Z M1.5 7.6 Q4 10 6 9.6 M14.5 7.6 Q12 10 10 9.6"/><circle cx="8" cy="9.4" r="2"/></g></svg>
<div class="t b" style="left:38.7px;top:304px;font-size:11.55px;color:#fff;line-height:16px">Tiền lương</div>
<svg style="left:15.3px;top:336px" width="16" height="16" viewBox="0 0 16 16"><g stroke="#fff" fill="none" stroke-width="1.25" stroke-linecap="round" stroke-linejoin="round"><path d="M1.4 2 H3.4 L4.4 4.4 H14.4 V9.4 Q14.4 10.8 13 10.8 H6.4 Q5 10.8 5 9.4 V5 M5.4 6.4 H13.8"/><circle cx="6.4" cy="13.4" r="1"/><circle cx="12.4" cy="13.4" r="1"/></g></svg>
<div class="t b" style="left:38.7px;top:336px;font-size:11.55px;color:#fff;line-height:16px">Mua hàng</div>
<svg style="left:15.3px;top:368.5px" width="16" height="16" viewBox="0 0 16 16"><g stroke="#fff" fill="none" stroke-width="1.25" stroke-linecap="round" stroke-linejoin="round"><path d="M1.8 3 Q1.8 1.6 3.2 1.6 H12.8 Q14.2 1.6 14.2 3 V6.2 Q14.2 7.8 12.2 7.8 Q10.4 7.8 10.1 6.2 Q9.8 7.8 8 7.8 Q6.2 7.8 5.9 6.2 Q5.6 7.8 3.8 7.8 Q1.8 7.8 1.8 6.2 Z M5.9 1.6 V6.2 M10.1 1.6 V6.2 M14.2 8 V12.6 Q14.2 14.2 12.6 14.2 H7.6"/><circle cx="3.8" cy="12.2" r="2.4"/><path d="M3.8 11 V13.4 M2.6 12.2 H5"/></g></svg>
<div class="t b" style="left:38.7px;top:368px;font-size:11.55px;color:#fff;line-height:16px">Bán hàng</div>
<svg style="left:15.3px;top:400.5px" width="16" height="16" viewBox="0 0 16 16"><g stroke="#fff" fill="none" stroke-width="1.25" stroke-linecap="round" stroke-linejoin="round"><path d="M13 7 V3.2 Q13 1.6 11.4 1.6 H4.2 Q2.6 1.6 2.6 3.2 V14 L4.4 12.8 L6 14 L7.4 13 M5.2 5 H10.4 M5.2 7.8 H8.6"/><text x="12.2" y="14.6" font-size="6.5" font-weight="bold" text-anchor="middle" fill="#fff" stroke="none" font-family="Liberation Sans">$</text></g></svg>
<div class="t b" style="left:38.7px;top:400px;font-size:11.55px;color:#fff;line-height:16px">Hóa đơn</div>
<svg style="left:15.3px;top:433px" width="16" height="16" viewBox="0 0 16 16"><g stroke="#fff" fill="none" stroke-width="1.25" stroke-linecap="round" stroke-linejoin="round"><path d="M1.6 5.6 L8 1.6 L14.4 5.6 V6.8 H1.6 Z M3.6 6.8 V12 M6.5 6.8 V12 M9.5 6.8 V12 M12.4 6.8 V12 M2.2 12 H13.8 M1.2 14.4 H14.8"/><circle cx="8" cy="4.4" r="0.6"/></g></svg>
<div class="t b" style="left:38.7px;top:432px;font-size:11.55px;color:#fff;line-height:16px">Thuế</div>
<svg style="left:15.3px;top:465px" width="16" height="16" viewBox="0 0 16 16"><g stroke="#fff" fill="none" stroke-width="1.25" stroke-linecap="round" stroke-linejoin="round"><path d="M1.8 3.4 Q1.8 1.6 3.6 1.6 H12.4 Q14.2 1.6 14.2 3.4 V12.6 Q14.2 14.4 12.4 14.4 H3.6 Q1.8 14.4 1.8 12.6 Z M5.6 1.6 V7 L8 5.4 L10.4 7 V1.6 M5.2 9.6 H10.8 M5.2 11.8 H10.8"/></g></svg>
<div class="t b" style="left:38.7px;top:465px;font-size:11.55px;color:#fff;line-height:16px">Tổng hợp</div>
<svg style="left:15.3px;top:497.5px" width="16" height="16" viewBox="0 0 16 16"><g stroke="#fff" fill="none" stroke-width="1.25" stroke-linecap="round" stroke-linejoin="round"><path d="M1.6 3.4 Q1.6 1.6 3.4 1.6 H12.6 Q14.4 1.6 14.4 3.4 V12.6 Q14.4 14.4 12.6 14.4 H3.4 Q1.6 14.4 1.6 12.6 Z M5 11.8 V10 M8 11.8 V8.2 M11 11.8 V6.4 M4.8 7.8 L11 3.8 M8.8 3.6 H11.2 V6"/></g></svg>
<div class="t b" style="left:38.7px;top:497px;font-size:11.55px;color:#fff;line-height:16px">Báo cáo</div>
<div style="left:8px;top:522px;width:138px;height:2px;background:#8b8c97"></div>
<div style="left:16px;top:530px;width:15px;height:15.5px;background:linear-gradient(#fbcc2f,#f4a51c);border-radius:3.5px"></div>
<svg style="left:16px;top:530px" width="15" height="15.5" viewBox="0 0 15 15.5"><path d="M7.5 4.4 L11.4 6 V10.6 L7.5 12.6 L3.6 10.6 V6 Z" fill="#fff"/><path d="M7.5 7.6 V12.6 M3.6 6 L7.5 7.6 L11.4 6" stroke="#f5b81f" stroke-width="0.7" fill="none"/><path d="M7.5 2.2 V3.4 M4.6 3 L5.2 3.9 M10.4 3 L9.8 3.9" stroke="#fff" stroke-width="0.7"/></svg>
<div class="t b" style="left:38.7px;top:529px;font-size:11.4px;color:#fff;line-height:16px">Kiến thức hữu ích</div>
<div style="left:16px;top:562.3px;width:15px;height:15.5px;background:linear-gradient(#35c98a,#25b179);border-radius:3.5px"></div>
<svg style="left:16px;top:562.3px" width="15" height="15.5" viewBox="0 0 15 15.5"><path d="M3 11.8 L7.3 3.6 L9 6.8 L7.4 7.6 L10 11.8 H8 L6.4 9 L4.8 11.8 Z M9.3 7.6 L12 11.8 H10.6 L8.6 8.4 Z" fill="#fff"/></svg>
<div class="t b" style="left:38.7px;top:561px;font-size:11.55px;color:#fff;line-height:16px">Kế toán dịch vụ</div>
<div style="left:8px;top:587px;width:129px;height:2px;background:#8b8c97"></div>
<div style="left:8px;top:593px;width:138px;height:28px;background:#7b7cf0;border-radius:4px"></div>
<svg style="left:15.3px;top:598.6px" width="16" height="16" viewBox="0 0 16 16"><g stroke="#fff" fill="none" stroke-width="1.25" stroke-linecap="round" stroke-linejoin="round"><path d="M1.6 3.8 Q1.6 2 3.4 2 H12.6 Q14.4 2 14.4 3.8 V12.2 Q14.4 14 12.6 14 H3.4 Q1.6 14 1.6 12.2 Z M4 6 L5 7 L6.6 5.2 M8.4 6.2 H12 M4 10 L5 11 L6.6 9.2 M8.4 10.2 H12"/></g></svg>
<div class="t b" style="left:38.7px;top:598.5px;font-size:11.55px;color:#fff;line-height:16px">Danh mục</div>
<div style="left:153px;top:1px;width:671px;height:1px;background:#fff"></div>
<div style="left:823px;top:1px;width:1px;height:626px;background:#fff"></div>
<div style="left:153px;top:626px;width:671px;height:1px;background:#fff"></div>
<div style="left:0px;top:0px;width:825px;height:1px;background:#000"></div>
<div style="left:0px;top:0px;width:1px;height:628px;background:#000"></div>
<div style="left:824px;top:0px;width:1px;height:628px;background:#000"></div>
<div style="left:0px;top:627px;width:825px;height:1px;background:#000"></div>

</div>
<div id="anno">
<svg width="1940" height="954" viewBox="0 0 1940 954">
<rect x="988.5" y="491.6" width="115" height="261.4" fill="none" stroke="#fa3c40" stroke-width="3"/>
<rect x="1291.5" y="743.7" width="301.5" height="131.1" fill="none" stroke="#fa3c40" stroke-width="3"/>
<line x1="1135" y1="674.2" x2="1261" y2="734.8" stroke="#f94043" stroke-width="5.6"/>
<polygon points="1121.3,667.6 1144.6,664.8 1133.3,682.5" fill="#f94043"/>
<polygon points="1274.8,741.4 1262.8,726.7 1255.3,742.5" fill="#f94043"/>
</svg>
</div>
</body>
</html>
